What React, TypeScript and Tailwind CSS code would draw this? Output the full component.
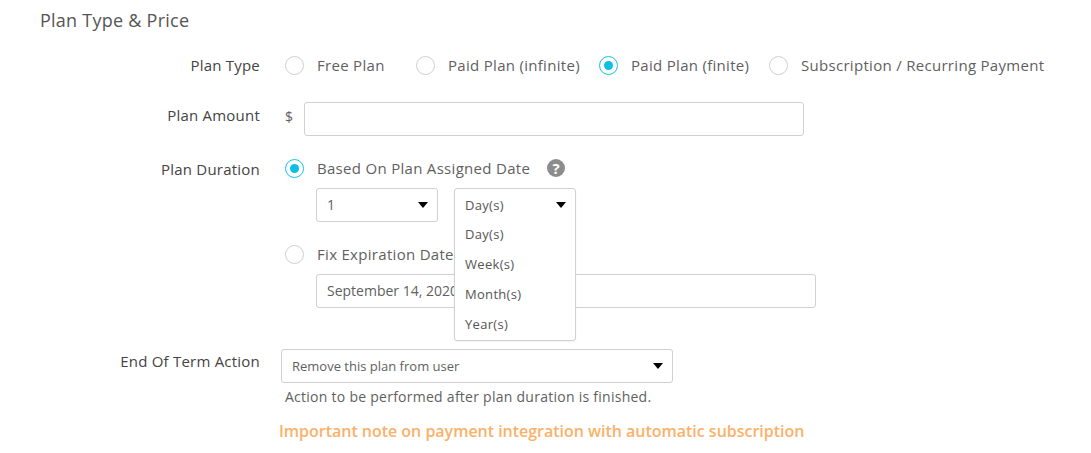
const font = { fontFamily: '"Open Sans", "Noto Sans", sans-serif' };

function Radio({ on = false }: { on?: boolean }) {
  return (
    <span className={`flex h-[19px] w-[19px] shrink-0 items-center justify-center rounded-full border bg-white ${on ? 'border-[#13c2e4]' : 'border-[#cfcfcf]'}`}>
      {on && <span className="h-[9px] w-[9px] rounded-full bg-[#0cc0e4]" />}
    </span>
  );
}

function RadioItem({ label, on, className = '' }: { label: string; on?: boolean; className?: string }) {
  return (
    <span className={`flex items-center gap-[13px] ${className}`}>
      <Radio on={on} />
      <span>{label}</span>
    </span>
  );
}

function Caret() {
  return <span className="h-0 w-0 border-x-[5.5px] border-t-[6px] border-x-transparent border-t-black" />;
}

function Select({ value, className = '' }: { value: string; className?: string }) {
  return (
    <div className={`flex h-[34px] items-center justify-between rounded-[3px] border border-[#d0d0d0] bg-white pl-[10px] pr-[9px] text-[13px] tracking-normal ${className}`}>
      <span>{value}</span>
      <Caret />
    </div>
  );
}

function Label({ children }: { children: string }) {
  return <div className="w-[220px] shrink-0 text-right tracking-[0.22px] text-[#444]">{children}</div>;
}

export default function App() {
  return (
    <div className="h-[453px] w-[1091px] overflow-hidden bg-white pl-10 pt-[8px] text-[15px] leading-[22px] tracking-[0.3px] text-[#5f5f5f]" style={font}>
      <h2 className="text-[18px] leading-[24px] tracking-[0.25px] text-[#555]">Plan Type &amp; Price</h2>

      <div className="mt-[22px] flex items-center">
        <Label>Plan Type</Label>
        <div className="ml-[25px] flex items-center whitespace-nowrap">
          <RadioItem label="Free Plan" className="w-[131px]" />
          <RadioItem label="Paid Plan (infinite)" className="w-[183px]" />
          <RadioItem label="Paid Plan (finite)" on className="w-[170px]" />
          <RadioItem label="Subscription / Recurring Payment" />
        </div>
      </div>

      <div className="mt-[26px] flex items-center">
        <div className="mb-[8px]"><Label>Plan Amount</Label></div>
        <span className="mb-[4px] ml-[25px] w-[19px] text-[14px]">$</span>
        <div className="h-[34px] w-[500px] rounded-[3px] border border-[#d0d0d0]" />
      </div>

      <div className="mt-[21px] flex">
        <div className="pt-[1px]"><Label>Plan Duration</Label></div>
        <div className="relative ml-[25px] flex flex-col">
          <div className="flex items-center">
            <RadioItem label="Based On Plan Assigned Date" on />
            <span className="ml-[17px] flex h-[18px] w-[18px] items-center justify-center rounded-full bg-[#8c8c8c] text-[15px] font-bold leading-none tracking-normal text-white">?</span>
          </div>
          <div className="ml-[31px] mt-[9px] flex gap-4">
            <Select value="1" className="w-[122px] text-[14px]" />
            <div className="w-[122px]" />
          </div>
          <div className="mt-[21px]">
            <RadioItem label="Fix Expiration Date" />
          </div>
          <div className="ml-[31px] mt-[9px] flex h-[34px] w-[500px] items-center rounded-[3px] border border-[#d0d0d0] pl-[10px] text-[14px] tracking-normal">
            September 14, 2020
          </div>

          <div className="absolute left-[169px] top-[31px] h-[153px] w-[122px] rounded-[3px] border border-[#d0d0d0] bg-white text-[13px] tracking-[0.3px] text-[#555] shadow-[0_1px_2px_rgba(0,0,0,0.05)]">
            <div className="flex h-[32px] items-center justify-between pl-[10px] pr-[9px]">
              <span>Day(s)</span>
              <Caret />
            </div>
            <div className="-mt-[2px] flex flex-col pl-[10px] leading-[30px]">
              <span>Day(s)</span>
              <span>Week(s)</span>
              <span>Month(s)</span>
              <span>Year(s)</span>
            </div>
          </div>
        </div>
      </div>

      <div className="mt-[41px] flex">
        <div className="pt-[1px]"><Label>End Of Term Action</Label></div>
        <div className="ml-[21px] flex flex-col">
          <Select value="Remove this plan from user" className="w-[392px]" />
          <div className="ml-[4px] mt-[3px] text-[14px] tracking-[0.26px]">Action to be performed after plan duration is finished.</div>
        </div>
      </div>

      <div className="ml-[239px] mt-[11px] text-[16px] font-semibold leading-[24px] tracking-[-0.02px] text-[#fbb169]">
        Important note on payment integration with automatic subscription
      </div>
    </div>
  );
}
